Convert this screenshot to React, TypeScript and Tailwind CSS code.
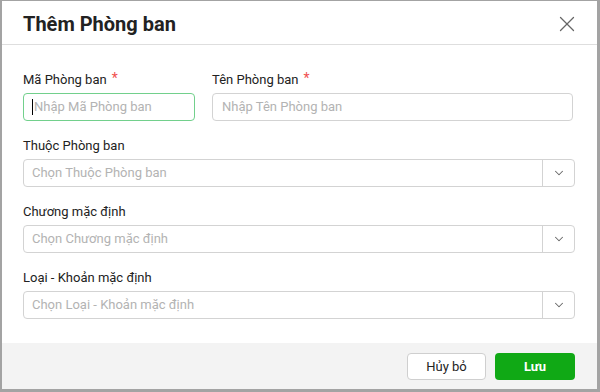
import { X, ChevronDown } from "lucide-react";

const font = { fontFamily: "Roboto, 'Noto Sans', sans-serif" };

const Label = ({ text, required }: { text: string; required?: boolean }) => (
  <div className="h-4 flex items-center text-[13px] text-[#222]">
    {text}
    {required && <span className="ml-[5px] text-[#f0504f] text-[14px] relative -top-[2px]">*</span>}
  </div>
);

const SelectBox = ({ placeholder }: { placeholder: string }) => (
  <div className="h-[28px] flex border border-[#d3d3d3] rounded-[4px] bg-white">
    <div className="flex-1 flex items-center pl-[8px] text-[13px] text-[#b3b3b3]">{placeholder}</div>
    <div className="w-[32px] border-l border-[#d3d3d3] flex items-center justify-center">
      <ChevronDown size={14} strokeWidth={1.75} className="text-[#666]" />
    </div>
  </div>
);

export default function App() {
  return (
    <div
      style={font}
      className="w-[600px] h-[392px] bg-white flex flex-col border-l-2 border-t border-r-[3px] border-b-[3px] border-[#a3a3a3]"
    >
      {/* header */}
      <div className="h-[44px] flex items-center justify-between pl-[21px] pr-[17px] border-b border-[#dedede]">
        <h1 className="text-[20px] font-bold text-[#222] pt-[2px]">Thêm Phòng ban</h1>
        <X size={26} strokeWidth={1.2} className="text-[#666] mt-[2px]" />
      </div>

      {/* body */}
      <div className="flex-1 flex flex-col gap-4 pt-[27px] pl-[21px] pr-[22px]">
        <div className="flex gap-[17px] pr-[2px]">
          <div className="w-[172px] flex flex-col gap-[5px]">
            <Label text="Mã Phòng ban" required />
            <div className="h-[28px] flex items-center border border-[#72d08c] rounded-[4px] pl-[8px] text-[13px] text-[#b3b3b3]">
              <span className="w-px h-[16px] bg-black mr-px" />
              Nhập Mã Phòng ban
            </div>
          </div>
          <div className="flex-1 flex flex-col gap-[5px]">
            <Label text="Tên Phòng ban" required />
            <div className="h-[28px] flex items-center border border-[#d3d3d3] rounded-[4px] pl-[9px] text-[13px] text-[#b3b3b3]">
              Nhập Tên Phòng ban
            </div>
          </div>
        </div>

        <div className="flex flex-col gap-[5px] pt-[1px]">
          <Label text="Thuộc Phòng ban" />
          <SelectBox placeholder="Chọn Thuộc Phòng ban" />
        </div>
        <div className="flex flex-col gap-[5px] pt-[1px]">
          <Label text="Chương mặc định" />
          <SelectBox placeholder="Chọn Chương mặc định" />
        </div>
        <div className="flex flex-col gap-[5px] pt-[1px]">
          <Label text="Loại - Khoản mặc định" />
          <SelectBox placeholder="Chọn Loại - Khoản mặc định" />
        </div>
      </div>

      {/* footer */}
      <div className="h-[46px] bg-[#f3f3f3] flex justify-end items-start pt-[10px] pr-[22px] gap-[9px]">
        <button className="w-[79px] h-[27px] bg-white border border-[#cfcfcf] rounded-[4px] text-[13px] text-[#222]">
          Hủy bỏ
        </button>
        <button className="w-[80px] h-[27px] bg-[#10a915] rounded-[4px] text-[13px] font-bold text-white">
          Lưu
        </button>
      </div>
    </div>
  );
}
